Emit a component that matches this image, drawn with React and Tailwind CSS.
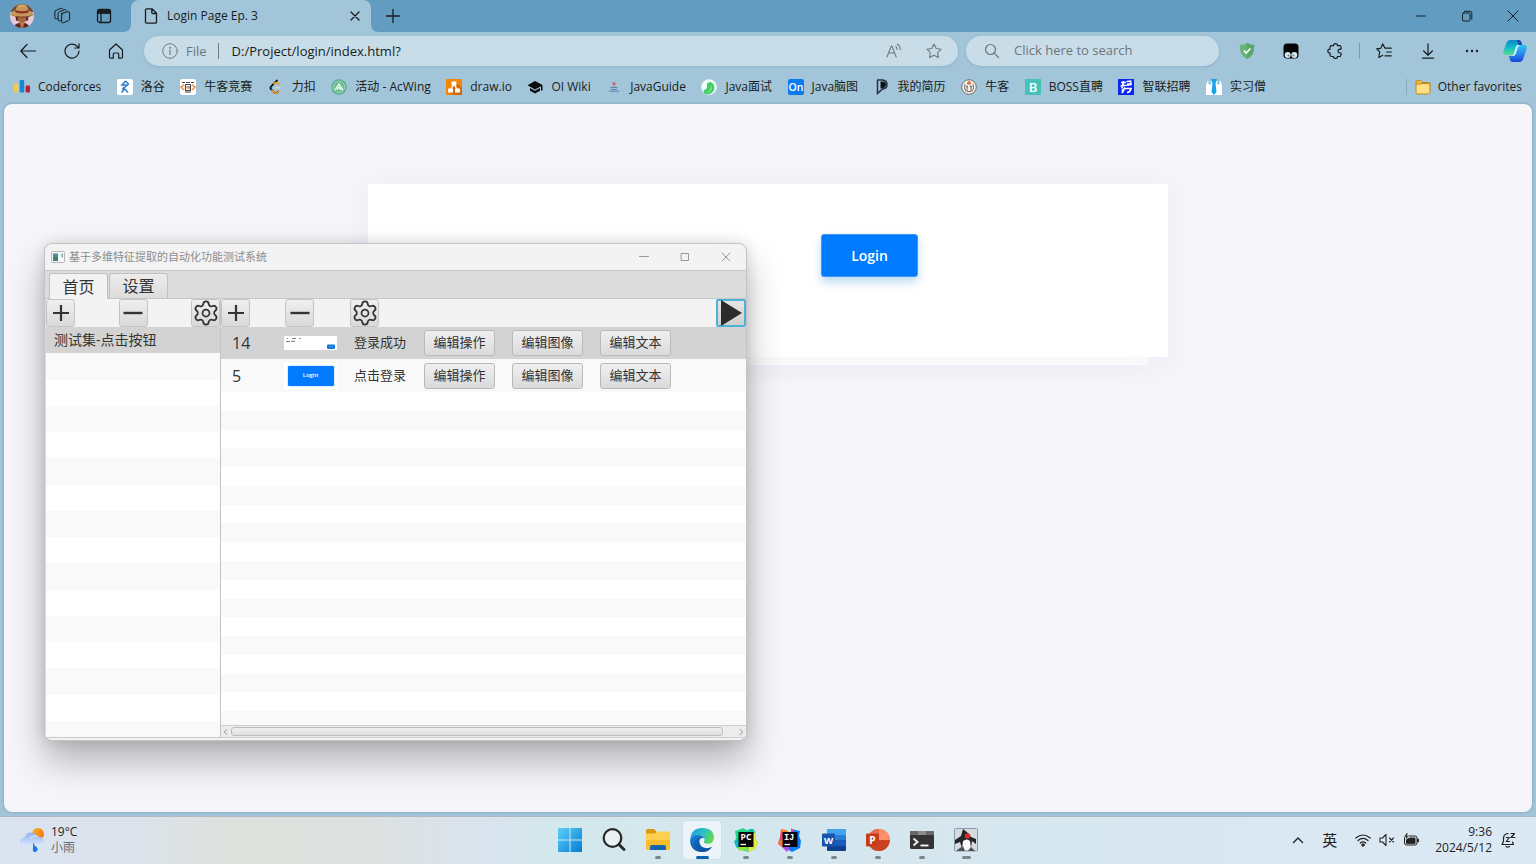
import React from "react";
import { Settings } from "lucide-react";
import {
  VscChevronLeft,
  VscChevronRight,
} from "react-icons/vsc";

const Svg = ({ size = "size-4", box = "0 0 16 16", children, className = "" }) => (
  <svg viewBox={box} fill="none" stroke="currentColor" strokeWidth="1" strokeLinecap="round" strokeLinejoin="round" aria-hidden="true" className={`${size} shrink-0 ${className}`}>
    {children}
  </svg>
);

/* ---------- browser icons ---------- */

const Avatar = () => (
  <svg viewBox="0 0 24 24" className="size-6 shrink-0" aria-hidden="true">
    <defs>
      <clipPath id="av"><circle cx="12" cy="12" r="12" /></clipPath>
    </defs>
    <g clipPath="url(#av)">
      <rect width="24" height="24" fill="#ecc9d8" />
      <path d="M0 0h24v8H0z" fill="#6d4a35" />
      <path d="M6.500 10h11v6q-5.500 6-11 0z" fill="#a8663d" />
      <path d="M5.500 11h2.500v5l-2 1zM16 11h2.500l-.5 6-2-1z" fill="#5b2a20" />
      <path d="M3 24q2-5 7-5h4q4 0 6 5z" fill="#5a2a20" />
      <path d="M9.500 18h5l-1.500 6h-2z" fill="#b8784c" />
      <path d="M0 11Q2 6.500 5.500 6.500q.5-6 6.500-6.300Q18 .500 18.500 6.500q4 .5 5.500 4.500-4 2-12 1.800T0 11z" fill="#c6975b" />
      <path d="M5.500 6q6.500 2.500 13 0l.2 2.200q-6.500 2.500-13.400 0z" fill="#8e2f25" />
      <path d="M1 11q11 3 22 0-5 3.500-11 3T1 11z" fill="#81502f" />
      <path d="M8 2.500q4-2 8 0" stroke="#e0b57a" fill="none" />
    </g>
  </svg>
);

const Workspaces = () => (
  <Svg size="size-5" box="0 0 20 20">
    <path d="M9.500 6.500 16 4.600q1.500-.2 1.600 1.200v6.400q0 1-.9 1.300l-5.300 2.300q-1.600.5-1.800-1V8q0-1.100 1-1.500z" transform="translate(0 1)" />
    <path d="M9 14.400l-1.300.5q-1.500.4-1.600-1V7.500q0-1.200 1-1.600l5.600-2.300q1.200-.3 1.500.8" />
    <path d="M5.500 12.500l-1 .4q-1.500.3-1.600-1V6q0-1.200 1-1.600l5.400-2.200q1.200-.3 1.500.8" />
  </Svg>
);

const TabActions = () => (
  <Svg>
    <rect x="1.500" y="1.500" width="13" height="13" rx="2" strokeWidth="1.300" />
    <path d="M1.500 5V3q0-1.500 1.500-1.500h10q1.500 0 1.500 1.500v2z" fill="currentColor" />
    <path d="M5 5v9.500" strokeWidth="1.300" />
  </Svg>
);

const PageIcon = () => (
  <Svg>
    <path d="M4 .8h5L13.500 5.300V14q0 1.200-1.200 1.200H3.700Q2.500 15.200 2.500 14V2Q2.500.8 3.700.8zM8.800.9v3.600q0 1 1 1h3.600" strokeWidth="1.300" />
  </Svg>
);

const BackIcon = () => (
  <Svg><path d="M15.500 8H.8M7 1.500L.8 8 7 14.500" strokeWidth="1.200" /></Svg>
);
const ReloadIcon = () => (
  <Svg><path d="M15 8A7 7 0 1 1 13 3.200L15 5M15 .8V5h-4.200" strokeWidth="1.200" /></Svg>
);
const HomeIcon = () => (
  <Svg><path d="M1.500 7L8 1l6.500 6v7q0 1.200-1.200 1.200h-2.600V11q0-1-1-1H6.300q-1 0-1 1v4.200H2.700Q1.500 15.200 1.500 14z" strokeWidth="1.200" /></Svg>
);
const InfoIcon = () => (
  <Svg><circle cx="8" cy="8" r="7.300" /><path d="M8 7.200v4.300" strokeWidth="1.200" /><circle cx="8" cy="4.800" r=".5" fill="currentColor" /></Svg>
);
const ReadAloud = () => (
  <Svg>
    <path d="M1 14L5.300 3h.6L10.200 14M2.700 10h5.800M9.800 3.500q1.300 1 1.300 3M11.300 1q3 2 3 5.500" strokeWidth="1.100" />
  </Svg>
);
const StarIcon = () => (
  <Svg><path d="M8 1l2.200 4.500 4.900.7-3.500 3.500.8 4.900L8 12.300l-4.400 2.300.8-4.900L.9 6.200l4.900-.7z" strokeWidth="1.100" /></Svg>
);
const SearchIcon = () => (
  <Svg><circle cx="6.500" cy="6.500" r="5" strokeWidth="1.200" /><path d="M10.200 10.200L14.500 14.500" strokeWidth="1.200" /></Svg>
);
const ShieldIcon = () => (
  <svg viewBox="0 0 16 16" className="size-4" aria-hidden="true">
    <path d="M8 0q3.500 2 7.200 2Q15.600 12.500 8 16 .4 12.500.8 2 4.500 2 8 0z" fill="#67b576" />
    <path d="M8 0q3.500 2 7.200 2Q15.600 12.500 8 16z" fill="#57a868" />
    <path d="M4.800 7.500l2.400 2.600 4.200-4.600" stroke="#fff" strokeWidth="1.600" fill="none" />
  </svg>
);
const MonkeyIcon = () => (
  <svg viewBox="0 0 16 16" className="size-4" aria-hidden="true">
    <rect x=".5" y=".5" width="15" height="15" rx="3.500" fill="#050505" />
    <circle cx="4.700" cy="12" r="3" fill="#d8eaf2" /><circle cx="11.300" cy="12" r="3" fill="#d8eaf2" />
    <circle cx="5.500" cy="12.500" r="1" fill="#6b7a82" /><circle cx="10.500" cy="12.500" r="1" fill="#6b7a82" />
  </svg>
);
const PuzzleIcon = () => (
  <Svg>
    <path d="M4.500 2.700h2Q6.500.7 8.500.7t2 2h2q1.500 0 1.500 1.500v2h-1.200q-1.800.2-1.800 1.900t1.800 1.900H14v2q0 1.500-1.500 1.500h-2q0 2-2 2t-2-2h-2Q3 13.500 3 12v-2Q.8 10 .8 8.100T3 6.200v-2q0-1.500 1.500-1.500z" strokeWidth="1.200" />
  </Svg>
);
const FavoritesIcon = () => (
  <Svg>
    <path d="M10 5.200H9L6.800.9 4.700 5.300l-4 .6 3 3-.9 5.600 4-2.200M9.800 5.200h5.500M10.500 9h4.800M9 12.800h6.300" strokeWidth="1.200" />
  </Svg>
);
const DownloadIcon = () => (
  <Svg><path d="M8 .8v11M3.500 7.800L8 12.200l4.500-4.400M2.500 15.200h11" strokeWidth="1.200" /></Svg>
);
const MoreIcon = () => (
  <Svg><g fill="currentColor" stroke="none"><circle cx="3" cy="8" r="1.200" /><circle cx="8" cy="8" r="1.200" /><circle cx="13" cy="8" r="1.200" /></g></Svg>
);
const CopilotIcon = () => (
  <svg viewBox="0 0 24 24" className="size-6 shrink-0" aria-hidden="true">
    <defs>
      <linearGradient id="cpa" x1="0" y1="0" x2="0" y2="1"><stop offset="0" stopColor="#0a86c8" /><stop offset=".5" stopColor="#12bccb" /><stop offset="1" stopColor="#55e08a" /></linearGradient>
      <linearGradient id="cpb" x1="0" y1="0" x2="0" y2="1"><stop offset="0" stopColor="#2cc4f2" /><stop offset=".5" stopColor="#2a8cf0" /><stop offset="1" stopColor="#1646d2" /></linearGradient>
    </defs>
    <path d="M7.500 1h8q1.800 0 2.300 2l.8 3h-3q-2 0-2.700 2.300L11 14q-.6 2-2.500 2H2.500Q-.6 16 .4 12L3.500 4Q4.500 1 7.500 1z" fill="url(#cpa)" />
    <path d="M13.500 1H16q2 .3 2.600 2.500L19.300 6h-3.500z" fill="#174fae" />
    <path d="M18 6h3.500q3.100 0 2.100 4l-3.100 9q-1 4-4 4h-7q-2 0-2.500-2l-1-4h2.500q2 0 2.700-2.200l2-6Q14 6 18 6z" fill="url(#cpb)" />
    <path d="M12.800 8.300Q13.500 6 15.600 6H18q-2.500 0-3.200 2.600l-2 6.300Q12 17 10 17H8q2.400-.2 3-2.500z" fill="#d8f3f5" />
  </svg>
);

/* ---------- bookmark icons ---------- */

const Fav = ({ children }) => (
  <svg viewBox="0 0 16 16" className="size-4 shrink-0" aria-hidden="true">{children}</svg>
);

const bookmarks = [
  { name: "Codeforces", icon: <Fav><rect x="0" y="4.500" width="4.300" height="9" rx="1" fill="#f8cb4a" /><rect x="5.700" y="1" width="4.500" height="12.500" rx="1" fill="#1b87d0" /><rect x="11.600" y="6.500" width="4.400" height="7" rx="1" fill="#bb1f31" /></Fav> },
  { name: "洛谷", icon: <Fav><rect width="16" height="16" rx="2" fill="#fff" /><path d="M8.500 2L5 6h5.500L5 10.500M6 8l5 5.500M8 9.500L4.500 13.500M8.500 2l3 3" stroke="#2f7fd0" strokeWidth="1.500" fill="none" /></Fav> },
  { name: "牛客竞赛", icon: <Fav><rect width="16" height="16" rx="2" fill="#fff" /><path d="M2 3.500h3M6 3.500h4M11 3.500h3M5.500 5.500h5v6h-5zM7 8h3M5 13h6" stroke="#474747" strokeWidth="1.100" fill="none" /><path d="M4 5.500L1 8.200 4 11M12 5.500l3 2.700-3 2.800M6.500 8l3 2" stroke="#ef8d3c" strokeWidth="1.500" fill="none" /></Fav> },
  { name: "力扣", icon: <Fav><path d="M9.500 1L3.200 7.300q-1.500 1.500 0 3l3 3.200q1.500 1.200 3 0l1.500-1.500" stroke="#161616" strokeWidth="1.800" fill="none" /><path d="M3.500 11l2.700 2.700q1.500 1.200 3 0l1.700-1.500M5.500 5L7 4q1.700-1 3 .2l1.500 1.500" stroke="#f49c1c" strokeWidth="1.700" fill="none" /><path d="M6.500 8.800h6.800" stroke="#d2d2d2" strokeWidth="1.500" /></Fav> },
  { name: "活动 - AcWing", icon: <Fav><circle cx="8" cy="8" r="7.700" fill="#56ae8c" /><circle cx="8" cy="8" r="5.800" fill="#70ba8b" stroke="#aadfd0" strokeWidth=".8" /><path d="M4 11l4-6 4 6M6 11l2-3 2.200 3" stroke="#e9fff1" strokeWidth="1.300" fill="none" /></Fav> },
  { name: "draw.io", icon: <Fav><rect width="16" height="16" rx="1" fill="#f08705" /><path d="M10 3l6 6v7H7l-4-4z" fill="#d9680b" /><path d="M8 5L4.500 11M8 5l3.500 6" stroke="#fff" strokeWidth="1.400" /><rect x="5.500" y="2.500" width="5" height="4" rx=".6" fill="#fff" /><rect x="2" y="9.500" width="5" height="4" rx=".6" fill="#fff" /><rect x="9" y="9.500" width="5" height="4" rx=".6" fill="#fff" /></Fav> },
  { name: "OI Wiki", icon: <Fav><path d="M8 2l7.500 4v5.500H14V7.200L8 10.500 .5 6.200z" fill="#0b0b0b" /><path d="M3 9l5 2.800L13 9v2.800L8 14.500 3 11.800z" fill="#0b0b0b" /></Fav> },
  { name: "JavaGuide", icon: <Fav><circle cx="8" cy="4.500" r="1.600" fill="#cf5d6c" /><path d="M4.500 8.500h7M5 10q3 1.200 6 0" stroke="#5b87b8" strokeWidth="1.200" fill="none" /><path d="M3 12.300h10" stroke="#7197c0" strokeWidth="1.600" /><path d="M6 7h4" stroke="#c98395" /></Fav> },
  { name: "Java面试", icon: <Fav><circle cx="8" cy="8" r="7.800" fill="#f2fbf5" /><path d="M7 3.500q3-1.500 5 1 2.500 4 .5 7.500-3 4-8 3Q1.500 13 3 11q3.500-1 3-4-.5-2.500 1-3.500z" fill="#3ecf68" /><path d="M10 6q2 3 0 6-2 2-5 2 5-3 5-8z" fill="#7fdc7a" /></Fav> },
  { name: "Java脑图", icon: <Fav><rect width="16" height="16" rx="2" fill="#0b7bf2" /><text x="8" y="12" textAnchor="middle" fontSize="10.500" fontWeight="600" fill="#fff" fontFamily="Open Sans">On</text></Fav> },
  { name: "我的简历", icon: <Fav><path d="M3 1h5.500Q13 1.500 13 5.500T8.500 10L3.500 14.500V1z" fill="none" stroke="#26323a" strokeWidth="1.500" /><path d="M6.500 2.500q6-.5 5.500 3.300-.5 3.700-5.500 3.700z" fill="#0c1114" /></Fav> },
  { name: "牛客", icon: <Fav><circle cx="8" cy="8" r="7.300" fill="#f3efea" stroke="#6b6464" strokeWidth=".9" /><path d="M4 5q-1.500 4 1 7.500M12 5q1.500 4-1 7.500M6 8v4.500h4V8" stroke="#6b5a55" strokeWidth=".9" fill="none" /><path d="M6 3.500L8 1.500l2 2v2H6z" fill="#d9773c" /><circle cx="6" cy="7.500" r=".8" fill="#333" /><circle cx="10" cy="7.500" r=".8" fill="#333" /></Fav> },
  { name: "BOSS直聘", icon: <Fav><rect width="16" height="16" fill="#45c3b8" /><text x="8" y="13" textAnchor="middle" fontSize="13" fontWeight="600" fill="#fff" fontFamily="Open Sans">B</text></Fav> },
  { name: "智联招聘", icon: <Fav><rect width="16" height="16" fill="#0c25f0" /><path d="M3 3.500h5M5.500 2L4 9.500M8.500 2.500l5-.5M9 5h4l-.5-2M2.500 7l11-1.500M7 8.500L4 14M6 9.500h7q-1 4-4 4M3.500 11.500l3-1" stroke="#fff" strokeWidth="1.700" fill="none" /></Fav> },
  { name: "实习僧", icon: <Fav><path d="M1.500 2h4L8 6l2.500-4h4L16 6v10H0V6z" fill="#fff" /><path d="M5 0h6L9.500 4.500H6.500zM6.500 4.500h3L10.500 13 8 16l-2.500-3z" fill="#18a3e8" /><path d="M4 1L2 4l3 2zM12 1l2 3-3 2z" fill="#59bdee" /></Fav> },
];

const FolderIcon = () => (
  <svg viewBox="0 0 16 16" className="size-4 shrink-0" aria-hidden="true">
    <path d="M1 4.500h14v8.700q0 1.800-1.800 1.800H2.800Q1 15 1 13.200z" fill="#ffdf85" stroke="#b88a1f" />
    <path d="M1 5V3Q1 1.500 2.500 1.500h3L7.500 3.500 6 5z" fill="#f2be3c" stroke="#b88a1f" />
    <path d="M7 3.500h6.500Q15 3.500 15 5v2" fill="none" stroke="#b88a1f" />
  </svg>
);

function BrowserButton({ label, children, className = "" }) {
  return (
    <button type="button" aria-label={label} className={`flex h-7 items-center justify-center ${className}`}>{children}</button>
  );
}

function TabStrip() {
  return (
    <div className="flex h-8 items-stretch bg-[#629dc1]">
      <div className="flex w-[131px] items-center gap-[18px] pl-[10px]">
        <button type="button" aria-label="Profile"><Avatar /></button>
        <button type="button" aria-label="Workspaces"><Workspaces /></button>
        <button type="button" aria-label="Tab actions" className="ml-[6px]"><TabActions /></button>
      </div>
      <div className="relative flex w-60 items-center rounded-t-lg bg-[#a3c5da] pr-2 pl-3">
        <svg viewBox="0 0 8 8" className="absolute bottom-0 -left-2 size-2" aria-hidden="true"><path d="M8 0v8H0q8 0 8-8z" fill="#a3c5da" /></svg>
        <svg viewBox="0 0 8 8" className="absolute -right-2 bottom-0 size-2" aria-hidden="true"><path d="M0 0v8h8q-8 0-8-8z" fill="#a3c5da" /></svg>
        <PageIcon />
        <span className="ml-2 flex-1 text-xs">Login Page Ep. 3</span>
        <button type="button" aria-label="Close tab"><Svg><path d="M4 4l8 8M12 4L4 12" strokeWidth="1.300" /></Svg></button>
      </div>
      <button type="button" aria-label="New tab" className="ml-[14px]"><Svg><path d="M8 1.500v13M1.500 8h13" strokeWidth="1.300" /></Svg></button>
      <div className="ml-auto flex">
        <button type="button" aria-label="Minimize" className="flex w-[46px] items-center justify-center"><Svg size="size-3" box="0 0 12 12"><path d="M1.500 6h9" /></Svg></button>
        <button type="button" aria-label="Restore" className="flex w-[46px] items-center justify-center"><Svg size="size-3" box="0 0 12 12"><rect x="1.500" y="3" width="7.500" height="8" rx="1.200" /><path d="M3.500 1.300h5.500q1.800 0 1.800 1.800v6" /></Svg></button>
        <button type="button" aria-label="Close" className="flex w-[46px] items-center justify-center"><Svg size="size-3" box="0 0 12 12"><path d="M1 1l10 10M11 1L1 11" /></Svg></button>
      </div>
    </div>
  );
}

function Toolbar() {
  return (
    <div className="flex h-[38px] items-center">
      <BrowserButton label="Back" className="ml-[6px] w-11"><BackIcon /></BrowserButton>
      <BrowserButton label="Reload" className="w-11"><ReloadIcon /></BrowserButton>
      <BrowserButton label="Home" className="w-11"><HomeIcon /></BrowserButton>
      <div className="ml-[6px] flex h-[30px] flex-1 items-center rounded-full bg-[#c9dde8] pr-4 pl-[18px] text-sm shadow-[0_1px_3px_rgba(70,120,150,0.25)]">
        <span className="text-[#6f7a81]"><InfoIcon /></span>
        <label htmlFor="address" className="ml-2 text-[13px] text-[#6c757b]">File</label>
        <span className="ml-[11px] h-4 w-px bg-[#737d84]" />
        <input id="address" type="text" defaultValue="D:/Project/login/index.html?" className="ml-[13px] h-6 min-w-0 flex-1 bg-transparent text-[13px] outline-none" />
        <button type="button" aria-label="Read aloud" className="text-[#6f7a81]"><ReadAloud /></button>
        <button type="button" aria-label="Add to favorites" className="ml-6 text-[#6f7a81]"><StarIcon /></button>
      </div>
      <div className="ml-2 flex h-[30px] w-[253px] items-center rounded-full bg-[#c9dde8] pl-[18px] text-[#6c757b] shadow-[0_1px_3px_rgba(70,120,150,0.25)]">
        <SearchIcon />
        <input type="search" aria-label="Search the web" placeholder="Click here to search" className="ml-[14px] w-44 bg-transparent text-[13px] outline-none placeholder:text-[#6c757b]" />
      </div>
      <BrowserButton label="Security" className="ml-[6px] w-11"><ShieldIcon /></BrowserButton>
      <BrowserButton label="Tampermonkey" className="w-11"><MonkeyIcon /></BrowserButton>
      <BrowserButton label="Extensions" className="w-11"><PuzzleIcon /></BrowserButton>
      <span className="mx-[2px] h-4 w-px bg-[#7d9bad]" />
      <BrowserButton label="Favorites" className="w-11"><FavoritesIcon /></BrowserButton>
      <BrowserButton label="Downloads" className="w-11"><DownloadIcon /></BrowserButton>
      <BrowserButton label="Settings and more" className="w-11"><MoreIcon /></BrowserButton>
      <BrowserButton label="Copilot" className="w-[42px]"><CopilotIcon /></BrowserButton>
    </div>
  );
}

function BookmarkBar() {
  return (
    <nav aria-label="Bookmarks" className="flex h-[34px] items-center justify-between px-[14px] text-xs whitespace-nowrap">
      <div className="flex w-[1252px] items-center justify-between">
        {bookmarks.map((b) => (
          <a key={b.name} href="#" className="flex items-center gap-2">{b.icon}<span>{b.name}</span></a>
        ))}
      </div>
      <a href="#" className="flex items-center gap-[7px] border-l border-[#86a9bf] pl-2"><FolderIcon /><span>Other favorites</span></a>
    </nav>
  );
}

/* ---------- test tool window ---------- */

const toolButton = "flex h-7 w-[29px] shrink-0 items-center justify-center rounded-[3px] border border-[#c4c4c4] bg-linear-to-b from-[#efefef] to-[#d9d9d9] text-[#333]";

const PlusGlyph = () => (<svg viewBox="0 0 20 20" className="size-5" aria-hidden="true"><path d="M10 2v16M2 10h16" stroke="currentColor" strokeWidth="2.200" /></svg>);
const MinusGlyph = () => (<svg viewBox="0 0 20 20" className="size-5 shrink-0" aria-hidden="true"><path d="M0.500 10h19" stroke="currentColor" strokeWidth="2.400" /></svg>);
const GearGlyph = () => <Settings className="size-7 shrink-0" strokeWidth={1.5} aria-hidden="true" />;

function ToolButton({ label, children }) {
  return <button type="button" aria-label={label} className={toolButton}>{children}</button>;
}

const steps = [
  { id: "14", name: "登录成功", selected: true, thumb: (
    <div className="flex h-[14px] w-[53px] bg-white">
      <svg viewBox="0 0 53 14" className="h-[14px] w-[53px]" aria-hidden="true">
        <path d="M2 5.500h4M7 5.300h4M3 2.500h1M8 2.500h2M10 2.500h2M15 2.500h1.500" stroke="#777" strokeWidth="1" />
        <rect x="43" y="8.500" width="8" height="4.500" rx="1" fill="#0d78d4" /><path d="M45 10.800h4" stroke="#5aa5e6" strokeWidth=".8" />
      </svg>
    </div>) },
  { id: "5", name: "点击登录", selected: false, thumb: (
    <div className="flex h-[26px] w-[53px] items-center justify-center bg-white">
      <span className="flex h-5 w-[46px] items-center justify-center rounded-[1px] bg-[#007bff] text-[6px] font-semibold text-white shadow-[0_0_2px_#7fbfff]">Login</span>
    </div>) },
];
const actions = ["编辑操作", "编辑图像", "编辑文本"];
const blankSuites = Array.from({ length: 15 }, (_, i) => i);
const blankSteps = Array.from({ length: 18 }, (_, i) => i);

function ToolWindow() {
  return (
    <section aria-label="基于多维特征提取的自动化功能测试系统" className="absolute top-[139px] left-10 flex h-[498px] w-[703px] flex-col overflow-hidden rounded-lg border border-[#c3c3c5] bg-[#f3f3f3] text-[#333] shadow-[0_20px_36px_rgba(0,0,0,0.28),0_0_14px_rgba(0,0,0,0.12)]">
      <header className="flex h-[26px] shrink-0 items-center pl-[6px] text-[11px] text-[#8c8c8c]">
        <svg viewBox="0 0 14 12" className="h-3 w-[14px]" aria-hidden="true"><rect x=".5" y=".5" width="13" height="11" rx="1" fill="#f6f6f6" stroke="#b5b5b5" /><rect x="2" y="2.500" width="5" height="7.500" fill="#4a8f93" /><rect x="2" y="6" width="5" height="4" fill="#3f7f72" /><rect x="10.500" y="2.500" width="1.500" height="4" fill="#76b6a7" /></svg>
        <h1 className="ml-1">基于多维特征提取的自动化功能测试系统</h1>
        <div className="ml-auto flex text-[#999]">
          <button type="button" aria-label="最小化" className="flex w-[41px] items-center justify-center"><Svg size="size-[10px]" box="0 0 10 10"><path d="M.5 4.500h9" /></Svg></button>
          <button type="button" aria-label="最大化" className="flex w-[41px] items-center justify-center"><Svg size="size-[10px]" box="0 0 10 10"><rect x="1.500" y="1.500" width="7" height="7" /></Svg></button>
          <button type="button" aria-label="关闭" className="flex w-[41px] items-center justify-center"><Svg size="size-[10px]" box="0 0 10 10"><path d="M1 1l8 8M9 1L1 9" /></Svg></button>
        </div>
      </header>
      <div role="tablist" className="flex h-[29px] shrink-0 items-end gap-px border-t border-b border-[#c8c8c8] bg-[#dcdcdc] pl-1 text-base">
        <button type="button" role="tab" aria-selected="true" className="-mb-px flex h-[26px] w-[59px] items-center justify-center rounded-t-[3px] border border-b-0 border-[#c0c0c0] bg-[#f3f3f3]">首页</button>
        <button type="button" role="tab" aria-selected="false" className="flex h-[25px] w-[59px] items-center justify-center rounded-t-[3px] border border-b-0 border-[#c0c0c0] bg-linear-to-b from-[#ececec] to-[#dcdcdc]">设置</button>
      </div>
      <div className="flex min-h-0 flex-1">
        <div className="flex w-[176px] shrink-0 flex-col border-r border-l border-r-[#c4c4c4] border-l-[#dcdcdc]">
          <div className="flex h-7 shrink-0 justify-between">
            <ToolButton label="添加测试集"><PlusGlyph /></ToolButton>
            <ToolButton label="删除测试集"><MinusGlyph /></ToolButton>
            <ToolButton label="测试集设置"><GearGlyph /></ToolButton>
          </div>
          <div className="min-h-0 flex-1 overflow-hidden border-b border-[#c8c8c8] bg-white">
            <ul className="grid h-[420px] auto-rows-fr text-sm">
              <li className="flex items-center bg-[#d3d3d3] pl-2">测试集-点击按钮</li>
              {blankSuites.map((i) => <li key={i} className="odd:bg-white even:bg-[#f9f9f9]" />)}
            </ul>
          </div>
        </div>
        <div className="flex min-w-0 flex-1 flex-col">
          <div className="flex h-7 shrink-0">
            <ToolButton label="添加步骤"><PlusGlyph /></ToolButton>
            <div className="ml-[35px] flex"><ToolButton label="删除步骤"><MinusGlyph /></ToolButton></div>
            <div className="ml-9 flex"><ToolButton label="步骤设置"><GearGlyph /></ToolButton></div>
            <button type="button" aria-label="运行" className="ml-auto flex h-7 w-[30px] items-center justify-center rounded-[2px] border-2 border-[#4db3d6] bg-linear-to-b from-[#e6e6e6] to-[#cfcfcf]">
              <svg viewBox="0 0 22 26" className="h-[26px] w-[22px] shrink-0" aria-hidden="true"><path d="M1 0l21 13L1 26z" fill="#2b2b2b" /></svg>
            </button>
          </div>
          <div className="min-h-0 flex-1 overflow-hidden bg-white">
            <table className="w-full table-fixed border-collapse">
              <colgroup><col className="w-[63px]" /><col className="w-[62px]" /><col className="w-[78px]" /><col className="w-[88px]" /><col className="w-[88px]" /><col /></colgroup>
              <tbody>
                {steps.map((s) => (
                  <tr key={s.id} className={s.selected ? "h-8 bg-[#d3d3d3]" : "h-[33px] bg-[#f9f9f9]"}>
                    <td className="p-0 pl-[11px] text-base">{s.id}</td>
                    <td className="p-0">{s.thumb}</td>
                    <td className="p-0 pl-2 text-[13px] whitespace-nowrap">{s.name}</td>
                    {actions.map((a) => (
                      <td key={a} className="p-0">
                        <button type="button" className="block h-[26px] w-[71px] rounded-[3px] border border-[#b9b9b9] bg-linear-to-b from-[#f0f0f0] to-[#dadada] text-[13px] whitespace-nowrap">{a}</button>
                      </td>
                    ))}
                  </tr>
                ))}
              </tbody>
            </table>
            <ul className="grid h-[338px] auto-rows-fr" aria-hidden="true">
              {blankSteps.map((i) => <li key={i} className="odd:bg-white even:bg-[#f9f9f9]" />)}
            </ul>
          </div>
          <div className="flex h-[13px] shrink-0 items-center border-t border-b border-[#cfcfcf] bg-[#ececec] text-[#777]">
            <VscChevronLeft className="size-[10px]" />
            <div className="h-[9px] w-[492px] rounded-[3px] border border-[#bcbcbc] bg-linear-to-b from-[#f0f0f0] to-[#dedede]" />
            <VscChevronRight className="ml-auto size-[10px]" />
          </div>
        </div>
      </div>
      <div className="h-[2px] shrink-0" />
    </section>
  );
}

function LoginPage() {
  return (
    <div className="mx-auto w-full max-w-[800px]">
      <div className="grid h-[173px] grid-cols-2 bg-white shadow-[0_5px_30px_rgba(60,50,90,0.05)]">
        <div />
        <div className="pt-[50px] pl-[53px]">
          <button type="submit" className="h-[43px] w-[97px] rounded-[3px] border border-[#3f98f2] bg-[#007bff] text-sm font-semibold text-white shadow-[0_5px_10px_rgba(0,123,200,0.28)]">Login</button>
        </div>
      </div>
      <div className="mx-5 h-2 bg-[#f9f9fa] shadow-[0_8px_24px_rgba(60,50,90,0.04)]" />
    </div>
  );
}

/* ---------- taskbar ---------- */

const Ico = ({ children }) => (<svg viewBox="0 0 24 24" className="size-6" aria-hidden="true">{children}</svg>);

const apps = [
  { name: "Start", icon: <Ico><defs><linearGradient id="win" gradientUnits="userSpaceOnUse" x1="0" y1="0" x2="24" y2="24"><stop offset="0" stopColor="#5bd0fb" /><stop offset="1" stopColor="#067cd2" /></linearGradient></defs><path d="M0 0h11.500v11.500H0zM12.500 0H24v11.500H12.500zM0 12.500h11.500V24H0zM12.500 12.500H24V24H12.500z" fill="url(#win)" /></Ico> },
  { name: "Search", icon: <Ico><circle cx="10.500" cy="10" r="8.800" fill="#e9f1f5" stroke="#272727" strokeWidth="2.200" /><path d="M17 16.500l5 5" stroke="#272727" strokeWidth="2.800" strokeLinecap="round" /></Ico> },
  { name: "File Explorer", run: "w-[6px] bg-[#7b858a]", icon: <Ico><path d="M0 3q0-2 2-2h6l2.500 2.500L9 7H0z" fill="#d99a11" /><path d="M0 5.500h9L11 3.500h11q2 0 2 2V20q0 2-2 2H2q-2 0-2-2z" fill="#fdcf50" /><path d="M0 12h24v8q0 2-2 2H2q-2 0-2-2z" fill="#f9bd2a" /><path d="M4 22v-3q0-2 2-2h12q2 0 2 2v3z" fill="#1467b3" /><path d="M8 20h8" stroke="#0b4f91" strokeWidth="1" /></Ico> },
  { name: "Edge", active: true, run: "w-[13px] bg-[#0a62b2]", icon: <Ico>
    <defs>
      <linearGradient id="eg1" x1="0" y1=".2" x2="1" y2=".5"><stop offset="0" stopColor="#1b9de0" /><stop offset=".55" stopColor="#2cc1c4" /><stop offset="1" stopColor="#67d94b" /></linearGradient>
      <linearGradient id="eg2" x1="0" y1="0" x2=".6" y2="1"><stop offset="0" stopColor="#1a87d6" /><stop offset="1" stopColor="#0c4fa3" /></linearGradient>
    </defs>
    <path d="M.2 11Q1.500 0 12.300 0 24 .5 24 9.700q-.3 6-6.500 6.100-3.700 0-3.700-1.700.8-1 .8-2.500-.5-4.500-7-4.900Q2.500 6.800.2 11z" fill="url(#eg1)" />
    <path d="M.1 11.700Q2 6.800 7 6.700q5.500 0 7.300 3.500Q9.500 9.500 9.200 14q1 6.300 8 6.200 3-.3 5-1.500Q18 24.200 11.500 24 0 23 .1 11.700z" fill="url(#eg2)" />
    <path d="M9.300 13.500q1 6.700 8 6.700 3-.3 5-1.500-2.300 3.500-6 4.700Q7 24 4.800 17q-.5-6 5-7.500-1 1.500-.5 4z" fill="#1358a8" opacity=".55" />
  </Ico> },
  { name: "PyCharm", run: "w-[6px] bg-[#7b858a]", icon: <Ico><path d="M1 3l6-2 1-1 5 2 6-1 3 3-1 5 3 6-3 6-7 3-6-2-5-2-2-6 1-5z" fill="#21d789" /><path d="M18 2l4 2-1 5 3 6-3 6-7 3z" fill="#e5ec3e" /><path d="M0 13l4-2 3 11-5-3zM15 1l4 0 2 4h-5z" fill="#12b8c4" /><path d="M4 19h9l2 4-5-1-5 1z" fill="#8fe83f" /><rect x="4.500" y="4" width="15" height="15" fill="#070707" /><text x="12" y="12" textAnchor="middle" fontSize="8.500" fontWeight="700" fill="#fff" fontFamily="Open Sans">PC</text><path d="M6.500 16.500h5.500" stroke="#fff" strokeWidth="1.300" /></Ico> },
  { name: "IntelliJ IDEA", run: "w-[6px] bg-[#7b858a]", icon: <Ico><path d="M3 1l6 2-2 18-7-5 2-7z" fill="#f83f73" /><path d="M0 14l5-3v9z" fill="#fc801d" /><path d="M13 1l9 2-1 5 2 5-1 7-8 4-5-3 4-8z" fill="#087cfa" /><path d="M4 19h8l-3 5-3-3z" fill="#b04be0" /><path d="M3 1l6 1 2 3H4z" fill="#fc8a2c" /><path d="M13 0l3 3-3 2z" fill="#f83f73" /><rect x="4.500" y="4" width="15" height="15" fill="#090612" /><text x="11" y="12" textAnchor="middle" fontSize="8.500" fontWeight="700" fill="#fff" fontFamily="Liberation Mono">IJ</text><path d="M6.500 16.500h5.500" stroke="#fff" strokeWidth="1.300" /></Ico> },
  { name: "Word", run: "w-[6px] bg-[#7b858a]", icon: <Ico><rect x="5" y="1" width="19" height="22" rx="1.500" fill="#2b7cd3" /><path d="M5 1h19v6H5z" fill="#41a5ee" /><path d="M5 12h19v6H5z" fill="#185abd" /><path d="M5 18h19v3.500q0 1.500-1.500 1.500h-16Q5 23 5 21.500z" fill="#103f91" /><rect x="0" y="5.500" width="13" height="13" rx="1.300" fill="#1854ae" /><text x="6.500" y="15.500" textAnchor="middle" fontSize="9.500" fontWeight="700" fill="#fff" fontFamily="Open Sans">W</text></Ico> },
  { name: "PowerPoint", run: "w-[6px] bg-[#7b858a]", icon: <Ico><circle cx="12.800" cy="12" r="11" fill="#d35230" /><path d="M12.800 1a11 11 0 0 1 11 11h-11z" fill="#ff8f6b" /><path d="M1.800 12h22a11 11 0 0 1-22 0z" fill="#ca4423" /><path d="M12.800 1v11H1.800a11 11 0 0 1 11-11z" fill="#ed6c47" /><rect x="0" y="5.500" width="13" height="13" rx="1.300" fill="#c43e1c" /><text x="6.500" y="15.500" textAnchor="middle" fontSize="10" fontWeight="700" fill="#fff" fontFamily="Open Sans">P</text></Ico> },
  { name: "Terminal", run: "w-[6px] bg-[#7b858a]", icon: <Ico><rect x="0" y="3" width="24" height="18" rx="1.500" fill="#343434" /><path d="M0 7V4.500Q0 3 1.500 3h21Q24 3 24 4.500V7z" fill="#696969" /><path d="M8 3h8v4H8z" fill="#8d8d8d" /><path d="M3.500 10.500l4 3.500-4 3.500" stroke="#ececec" strokeWidth="2" fill="none" /><path d="M10.500 17.500h8" stroke="#fff" strokeWidth="1.800" /></Ico> },
  { name: "Java", run: "w-[9px] bg-[#7b858a]", icon: <Ico><rect x=".5" y=".5" width="23" height="22.500" rx="1" fill="#d5dae1" stroke="#8b9bad" /><path d="M9 1l5 4 3 4 5 2v5l-4-3-1 7H8l-2-6-5 2v-4l6-4z" fill="#252525" /><path d="M9 13q4-3 7 0l1 7-4 2-5-1z" fill="#fafafa" /><circle cx="13.500" cy="8" r="2.800" fill="#d72a2c" /><path d="M3 22l6-4 2 5H3zM14 23l3-4 4 4z" fill="#4c5057" /></Ico> },
];

function Taskbar() {
  return (
    <footer className="grid h-12 grid-cols-[1fr_auto_1fr] items-center border-t border-[#b0b7bf] bg-[linear-gradient(90deg,#dae3f0_0%,#dbe2ec_8%,#dee1dc_15%,#dde1e0_24%,#d9e3ee_31%,#d3e8ed_37%,#d5e6ee_55%,#dbe9f4_100%)] pb-px text-[#222]">
      <button type="button" aria-label="Weather" className="ml-5 flex w-max items-center gap-[7px] text-left">
        <svg viewBox="0 0 24 24" className="size-6" aria-hidden="true">
          <defs><linearGradient id="cl" x1="0" y1="0" x2="0" y2="1"><stop offset="0" stopColor="#8fb3f0" /><stop offset="1" stopColor="#dfe9fc" /></linearGradient><linearGradient id="sn" x1="0" y1="0" x2="1" y2="1"><stop offset="0" stopColor="#fbb41e" /><stop offset="1" stopColor="#f06a10" /></linearGradient></defs>
          <circle cx="18" cy="6" r="6" fill="url(#sn)" />
          <path d="M5 18.500Q0 18 0 14t4.500-4.500Q6 4.500 11 4.500q4.500 0 6 4 6-.5 7 5-.5 5-5 5z" fill="url(#cl)" />
          <path d="M10 11q3-4 8-2.500" stroke="#c9dafa" strokeWidth="1.500" fill="none" />
          <path d="M13 14q.5 3 3.500 5 2 2 .3 4-1.500 1.500-3 .8Q12.500 23 13 20z" fill="#1878ea" />
        </svg>
        <span className="flex flex-col text-xs leading-4"><span>19°C</span><span className="text-[#666d75]">小雨</span></span>
      </button>
      <nav aria-label="Apps" className="flex gap-[6px]">
        {apps.map((a) => (
          <button key={a.name} type="button" aria-label={a.name} className={`relative flex h-[38px] w-[38px] items-center justify-center rounded ${a.active ? "bg-[#ecf4f9] shadow-[0_0_1px_rgba(0,0,0,0.2)]" : ""}`}>
            {a.icon}
            {a.run && <span className={`absolute bottom-0 h-[3px] rounded-full ${a.run}`} />}
          </button>
        ))}
      </nav>
      <div className="mr-5 flex items-center justify-end">
        <button type="button" aria-label="Show hidden icons"><Svg size="size-3" box="0 0 12 12"><path d="M1.500 8.500L6 4l4.500 4.500" strokeWidth="1.400" /></Svg></button>
        <button type="button" aria-label="Input language" className="ml-[18px] text-[15px]">英</button>
        <button type="button" aria-label="Network, volume and battery" className="ml-[18px] flex items-center gap-2">
          <Svg><path d="M.8 6q7.200-6 14.400 0M3 8.500q5-4.300 10 0M5.300 11q2.700-2.200 5.400 0" strokeWidth="1.200" /><circle cx="8" cy="13" r="1.200" fill="currentColor" /></Svg>
          <Svg><path d="M1 6h2.500L7 2.500v11L3.500 10H1zM10.500 6l4 4M14.500 6l-4 4" strokeWidth="1.100" /></Svg>
          <Svg><rect x="1.500" y="4" width="12.500" height="9" rx="2" /><path d="M3.500 11V7.500L7 6h5v5z" fill="currentColor" /><path d="M15 7.200h.5v2.600H15z" fill="currentColor" /><path d="M3.500 1L1 5h2l-.5 3L6 4H4L5 1z" fill="currentColor" stroke="#dceaf5" strokeWidth=".5" /></Svg>
        </button>
        <button type="button" aria-label="Date and time" className="ml-4 flex flex-col items-end text-xs leading-4"><span>9:36</span><span>2024/5/12</span></button>
        <button type="button" aria-label="Notifications" className="ml-2">
          <Svg><path d="M8 1.500Q3.500 2 3.500 6.500v3L2 12.500h11.500L12.500 10M6 14.500q1.800 1.300 3.500 0M6.300 5.500h3l-3 4h3.200M11 1.500h3.500l-3.500 4h3.700" strokeWidth="1.200" /></Svg>
        </button>
      </div>
    </footer>
  );
}

export default function App() {
  return (
    <div className="flex min-h-screen flex-col bg-[#a3c5da] font-['Open_Sans','Noto_Sans_CJK_SC',sans-serif] text-[#171c20]">
      <TabStrip />
      <Toolbar />
      <BookmarkBar />
      <main className="relative mx-1 mb-1 flex-1 overflow-hidden rounded-lg bg-[#f6f5fa] pt-20 shadow-[0_0_3px_rgba(60,100,130,0.5)]">
        <LoginPage />
        <ToolWindow />
      </main>
      <Taskbar />
    </div>
  );
}
